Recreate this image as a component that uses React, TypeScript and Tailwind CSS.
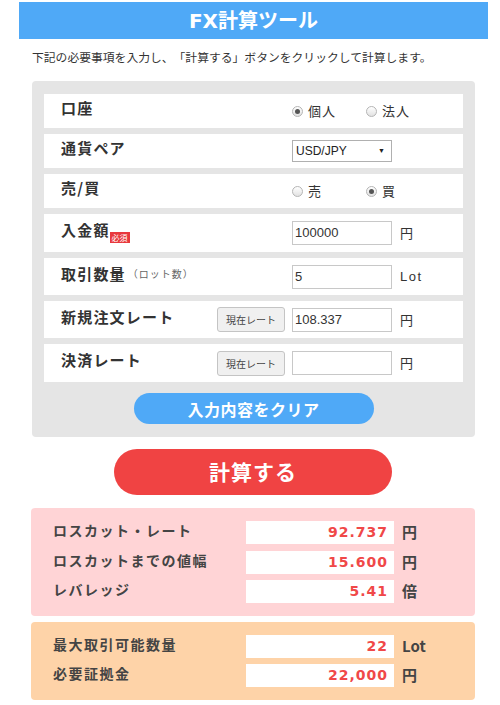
import React from "react";

const jp = "font-['Noto_Sans_CJK_JP',sans-serif]";

const Radio = ({ checked, label }: { checked?: boolean; label: string }) => (
  <div className="flex items-center w-[74px]">
    <span className="w-[11px] h-[11px] rounded-full border border-[#b5b5b5] bg-gradient-to-b from-white to-[#e2e2e2] flex items-center justify-center">
      {checked && <span className="w-[5px] h-[5px] rounded-full bg-[#555]" />}
    </span>
    <span className="ml-[5px] text-[13px] text-[#333] tracking-[1px]">{label}</span>
  </div>
);

const RateButton = () => (
  <div className="w-[68px] h-[25px] mr-[7px] rounded-[3px] border border-[#c4c4c4] bg-[#f0f0f0] flex items-center justify-center text-[10px] text-[#444]">
    現在レート
  </div>
);

const Field = ({ value }: { value?: string }) => (
  <div className="w-[100px] h-[24px] border border-[#c8c8c8] bg-white flex items-center pl-[2px] text-[13px] text-[#333] font-['Liberation_Sans',sans-serif]">
    {value}
  </div>
);

function Row({ h, label, children, rate }: { h: string; label: React.ReactNode; children: React.ReactNode; rate?: boolean }) {
  return (
    <div className={`flex items-center bg-white pl-[17px] ${h}`}>
      <div className="w-[156px] flex items-end text-[15px] font-bold text-[#333] leading-[18px] tracking-[1.2px] -translate-y-[3px]">{label}</div>
      <div className="w-[75px] flex">{rate && <RateButton />}</div>
      <div className="flex items-center">{children}</div>
    </div>
  );
}

const Unit = ({ children }: { children: React.ReactNode }) => (
  <span className="ml-[8px] text-[13px] text-[#333] tracking-[1px]">{children}</span>
);

const Result = ({ label, value, unit }: { label: string; value: string; unit: string }) => (
  <div className="flex items-center h-[23px]">
    <div className="w-[193px] text-[14px] font-bold text-[#444] tracking-[1.5px] -translate-y-[2px]">{label}</div>
    <div className="w-[148px] h-[23px] bg-white flex items-center justify-end pr-[6px] text-[14px] font-bold text-[#f04848] tracking-[1px] font-['DejaVu_Sans',sans-serif]">
      {value}
    </div>
    <div className="ml-[8px] text-[15px] font-bold text-[#444]">{unit}</div>
  </div>
);

export default function App() {
  return (
    <div className={`w-[500px] h-[705px] bg-white pt-[2px] ${jp}`}>
      <div className="ml-[19px] w-[469px] h-[37px] bg-[#4fa9f7] flex items-center justify-center text-white text-[20px] font-bold font-['DejaVu_Sans','Noto_Sans_CJK_JP',sans-serif]">
        FX計算ツール
      </div>
      <p className="mt-[11px] ml-[32px] text-[11.8px] leading-[14px] text-[#333] [text-spacing-trim:space-all]">
        下記の必要事項を入力し、「計算する」ボタンをクリックして計算します。
      </p>

      <div className="mt-[17px] ml-[32px] w-[443px] bg-[#e5e5e5] rounded-[4px] pt-[13px] pb-[13px] px-[12px]">
        <div className="flex flex-col gap-[6px]">
          <Row h="h-[34px]" label="口座">
            <Radio checked label="個人" />
            <Radio label="法人" />
          </Row>
          <Row h="h-[34px]" label="通貨ペア">
            <div className="w-[100px] h-[22px] border border-[#b0b0b0] bg-white flex items-center justify-between pl-[3px] pr-[6px] text-[12px] text-[#222] font-['Liberation_Sans',sans-serif]">
              <span>USD/JPY</span>
              <span className="text-[7px]">▼</span>
            </div>
          </Row>
          <Row h="h-[34px]" label="売/買">
            <Radio label="売" />
            <Radio checked label="買" />
          </Row>
          <Row
            h="h-[38px]"
            label={
              <>
                入金額
                <span className="mb-[-4px] w-[20px] h-[11px] bg-[#e8383d] text-white text-[8px] leading-[11px] font-normal tracking-normal text-center">必須</span>
              </>
            }
          >
            <Field value="100000" />
            <Unit>円</Unit>
          </Row>
          <Row
            h="h-[37px]"
            label={
              <>
                取引数量
                <span className="ml-[2px] text-[10px] font-normal text-[#666] tracking-[1px]">（ロット数）</span>
              </>
            }
          >
            <Field value="5" />
            <span className="ml-[8px] text-[13px] text-[#333] tracking-[1.5px] font-['Liberation_Sans',sans-serif]">Lot</span>
          </Row>
          <Row h="h-[37px]" label="新規注文レート" rate>
            <Field value="108.337" />
            <Unit>円</Unit>
          </Row>
          <Row h="h-[38px]" label="決済レート" rate>
            <Field />
            <Unit>円</Unit>
          </Row>
        </div>
        <div className="mt-[11px] flex justify-center">
          <button className="w-[240px] h-[31px] rounded-full bg-[#4fa9f7] text-white text-[16px] font-bold tracking-[0.5px]">
            入力内容をクリア
          </button>
        </div>
      </div>

      <div className="mt-[12px] flex justify-center pl-[6px]">
        <button className="w-[278px] h-[46px] rounded-full bg-[#f04343] text-white text-[21px] font-bold tracking-[1px]">
          計算する
        </button>
      </div>

      <div className="mt-[13px] ml-[31px] w-[444px] rounded-[4px] bg-[#ffd4d6] pl-[22px] py-[13px] flex flex-col gap-[6.5px]">
        <Result label="ロスカット・レート" value="92.737" unit="円" />
        <Result label="ロスカットまでの値幅" value="15.600" unit="円" />
        <Result label="レバレッジ" value="5.41" unit="倍" />
      </div>

      <div className="mt-[6px] ml-[31px] w-[444px] rounded-[4px] bg-[#fed3a8] pl-[22px] pt-[13px] pb-[13px] flex flex-col gap-[6px]">
        <Result label="最大取引可能数量" value="22" unit="Lot" />
        <Result label="必要証拠金" value="22,000" unit="円" />
      </div>
    </div>
  );
}
